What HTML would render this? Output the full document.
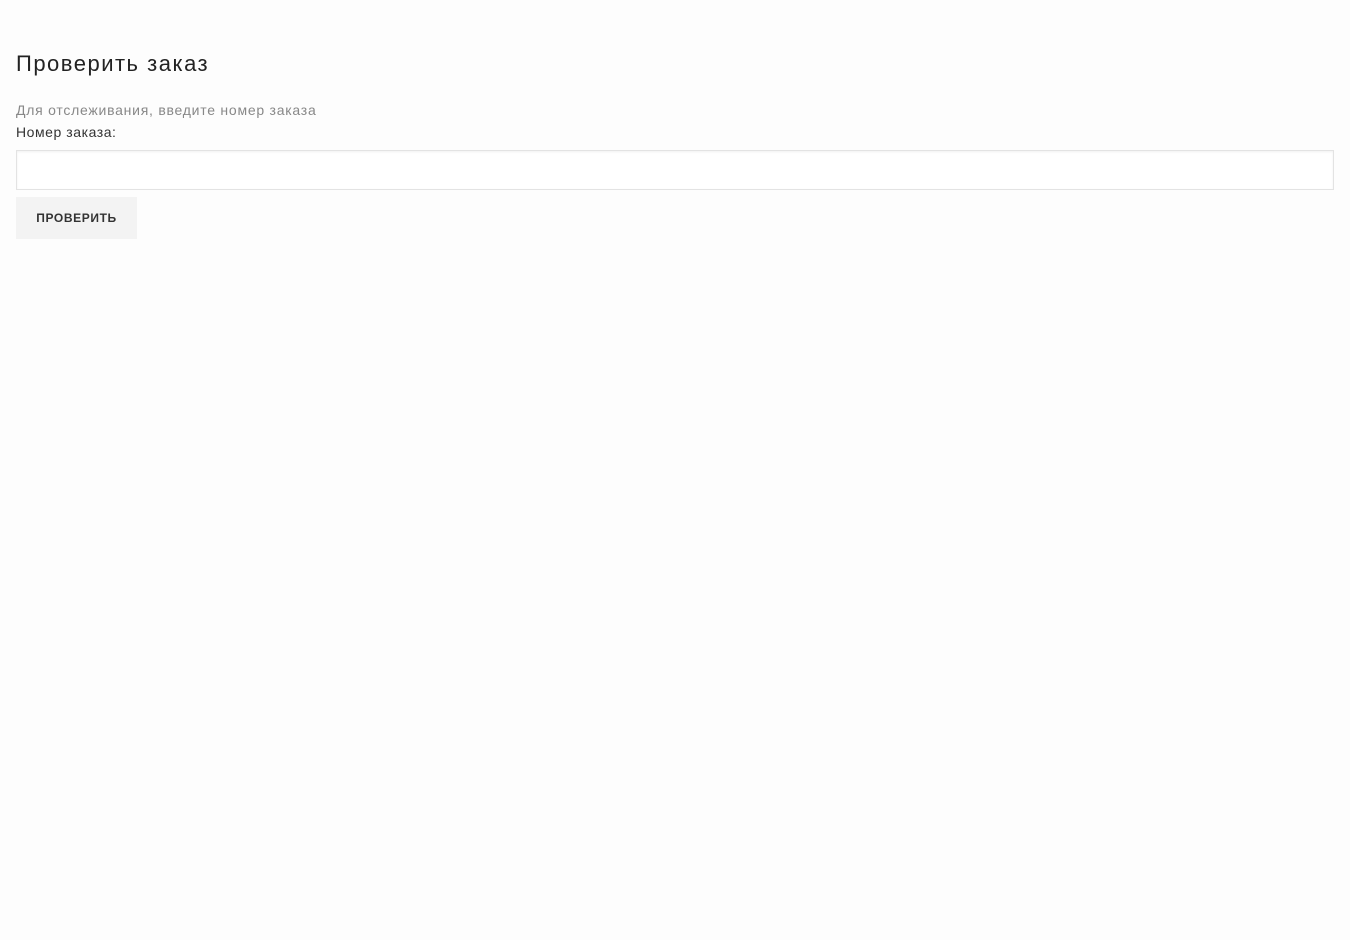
<!DOCTYPE html>
<html><head><meta charset="utf-8"><style>
body{margin:0;background:#fdfdfd;font-family:"Liberation Sans",sans-serif;width:1350px;height:940px;overflow:hidden;position:relative}
.t{position:absolute;left:16px;top:51px;font-size:22px;color:#222;letter-spacing:1.5px}
.d{position:absolute;left:16px;top:102px;font-size:14px;color:#888;letter-spacing:0.75px}
.l{position:absolute;left:16px;top:124px;font-size:14px;color:#333;letter-spacing:0.55px}
.i{position:absolute;left:16px;top:150px;width:1316px;height:38px;border:1px solid #e3e3e3;background:#fff;box-shadow:inset 0 1px 2px rgba(0,0,0,0.06)}
.b{position:absolute;left:16px;top:197px;width:121px;height:42px;background:#f3f3f3;font-size:12px;font-weight:bold;color:#333;text-align:center;line-height:42px;letter-spacing:0.6px}
</style></head><body>
<div class="t">Проверить заказ</div>
<div class="d">Для отслеживания, введите номер заказа</div>
<div class="l">Номер заказа:</div>
<div class="i"></div>
<div class="b">ПРОВЕРИТЬ</div>
</body></html>
